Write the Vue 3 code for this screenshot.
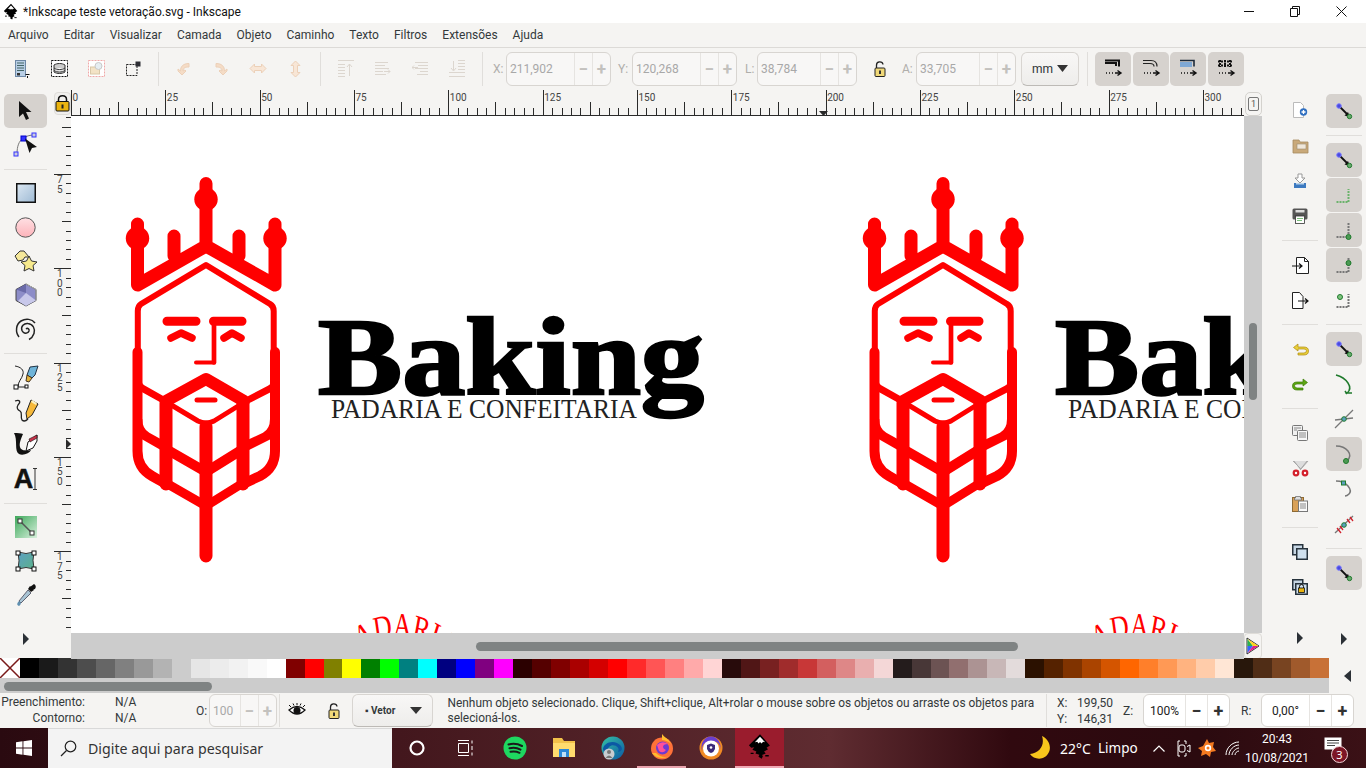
<script setup>
const menus = ['Arquivo', 'Editar', 'Visualizar', 'Camada', 'Objeto', 'Caminho', 'Texto', 'Filtros', 'Extensões', 'Ajuda']

const spins = [
  { label: 'X:', value: '211,902', text: 67, lead: 3.5, box: 13 },
  { label: 'Y:', value: '120,268', text: 67, lead: 7, box: 14 },
  { label: 'L:', value: '38,784', text: 62, lead: 8, box: 12 }
]

const PX = 9.433
const hTicks = Array.from({ length: 125 }, (_, i) => ({
  x: Math.round(i * PX) + 0.5,
  top: i % 10 === 0 ? 1 : i % 5 === 0 ? 13 : 19
}))
const hLabels = Array.from({ length: 13 }, (_, i) => ({ x: i * PX * 10 + 1.5, text: String(i * 25) }))
const vTicks = Array.from({ length: 56 }, (_, i) => ({
  y: Math.round(58 - 6 * PX + i * PX) + 0.5,
  left: (i - 6) % 10 === 0 ? 0 : (i - 6) % 5 === 0 ? 8 : 12
}))
const vLabels = [75, 100, 125, 150, 175].flatMap((n, i) =>
  String(n).split('').map((d, j) => ({ key: `${n}-${j}`, d, y: 58 + i * PX * 10 + 9 + j * 9.5 }))
)

const swatches = [
  '#000000', '#1a1a1a', '#333333', '#4d4d4d', '#666666', '#808080', '#999999', '#b3b3b3', '#cccccc', '#e6e6e6', '#ececec', '#f2f2f2', '#f9f9f9', '#ffffff',
  '#800000', '#ff0000', '#808000', '#ffff00', '#008000', '#00ff00', '#008080', '#00ffff', '#000080', '#0000ff', '#800080', '#ff00ff',
  '#2b0000', '#550000', '#800000', '#aa0000', '#d40000', '#ff0000', '#ff2a2a', '#ff5555', '#ff8080', '#ffaaaa', '#ffd5d5',
  '#280b0b', '#501616', '#782121', '#a02c2c', '#c83737', '#d35f5f', '#de8787', '#e9afaf', '#f4d7d7',
  '#241c1c', '#483737', '#6c5353', '#916f6f', '#ac9393', '#c8b7b7', '#e3dbdb',
  '#2b1100', '#552200', '#803300', '#aa4400', '#d45500', '#ff6600', '#ff7f2a', '#ff9955', '#ffb380', '#ffccaa', '#ffe6d5',
  '#28170b', '#502d16', '#784421', '#a05a2c', '#c87137'
]
</script>

<template>
  <div class="window">
    <svg class="defs" width="0" height="0">
      <defs>
        <symbol id="ink" viewBox="0 0 24 24">
          <path d="M12 1 2.500 10.500l2 2.200 2.600-.4-1.600 2 3.400 1.600-.8 1.600 3.400 1.200-.8 1.600 2.800 1.700 1-2.200-.8-.9 3.200-1.400-1.400-1.700 3.400-1.900-1.300-1.200 2.900-2z" fill="#000" />
          <path d="M12 3.200 7.600 8l2-.4 1.200 1.400L12 7.800l1.400 1.200 1.200-1.400 1.800.4z" fill="#fff" />
          <path d="M16.500 19.500h3M4 17.500h2.500" stroke="#000" stroke-width="1.200" />
        </symbol>
        <symbol id="snap-node" viewBox="0 0 36 34">
          <path d="M13 12 21 20" stroke="#111" stroke-width="1.800" />
          <path d="m24 23-5.500-1.500 3.500-3.500z" fill="#111" />
          <circle cx="13" cy="12" r="2.300" fill="#4a4adf" stroke="#7a7aff" />
          <circle cx="23.500" cy="22.500" r="2.200" fill="#6aa86f" stroke="#1f7a2c" />
        </symbol>
        <symbol id="lock-open" viewBox="0 0 14 18">
          <path d="M3.500 8V5c0-4 6-4 6.500-.5" fill="none" stroke="#222" stroke-width="1.300" />
          <rect x="2" y="8" width="10" height="8.500" rx="1" fill="#f0d878" stroke="#222" />
          <rect x="6" y="10.500" width="2" height="3.500" fill="#333" />
        </symbol>
        <symbol id="arrow-r" viewBox="0 0 8 14"><path d="M1 1v12l6-6z" fill="#2b3036" /></symbol>
      </defs>
    </svg>

    <header class="titlebar">
      <svg class="title-logo" width="18" height="18"><use href="#ink" /></svg>
      <span class="title-text">*Inkscape teste vetoração.svg - Inkscape</span>
      <div class="winctl">
        <span class="winbtn"><svg width="10" height="10"><path d="M0 5.500h10" stroke="#111" /></svg></span>
        <span class="winbtn"><svg width="10" height="11"><path d="M.5 2.500h7v8h-7zM2.500 2.500v-2h7v8h-2" fill="none" stroke="#111" /></svg></span>
        <span class="winbtn"><svg width="11" height="11"><path d="m.5.500 10 10M10.500.500l-10 10" stroke="#111" /></svg></span>
      </div>
    </header>

    <nav class="menubar">
      <span v-for="m in menus" :key="m">{{ m }}</span>
    </nav>

    <div class="toolbar">
      <span class="cell"><svg width="16" height="20" viewBox="0 0 16 20"><rect x="1.500" y="1.500" width="10" height="16" fill="#b9cfe6" stroke="#6d87a5" /><path d="M3 4h7M3 6.500h7M3 9h7M3 11.500h7" stroke="#466" /><rect x="3" y="14" width="3" height="2.500" fill="#333" /><path d="M11.500 15.500h4M13.500 17v2" stroke="#111" /></svg></span>
      <span class="cell"><svg width="17" height="17" viewBox="0 0 17 17"><rect x=".5" y=".5" width="16" height="16" fill="#fff" stroke="#111" stroke-dasharray="2 1" /><path d="M3 5c3-2 8-2 11 0v7c-3 2-8 2-11 0zM3 8c3 2 8 2 11 0M3 10.500c3 2 8 2 11 0" fill="#ccc" stroke="#333" /></svg></span>
      <span class="cell"><svg width="17" height="17" viewBox="0 0 17 17"><rect x=".5" y=".5" width="16" height="16" fill="#fff" stroke="#f0a8a8" stroke-dasharray="2 1" /><rect x="2.500" y="7" width="9" height="7" fill="#f3e3c6" stroke="#d8c8a8" /><circle cx="10.500" cy="6" r="3.500" fill="#e6eef2" stroke="#c8c8c8" /></svg></span>
      <span class="cell"><svg width="15" height="15" viewBox="0 0 15 15"><rect x=".5" y="3.500" width="10.500" height="11" fill="none" stroke="#222" stroke-dasharray="2 1" /><rect x="9.500" y=".5" width="5" height="5" fill="#2d2d33" /></svg></span>
      <i class="vsep"></i>
      <span class="cell"><svg width="14" height="16" viewBox="0 0 14 16"><path d="M12 2.500C6 2.500 3.500 5.500 3.500 10L1 8v2l4 4 4-4-1-1-2 1c0-3 2-4 6-4z" fill="#f5dcc6" stroke="#ecd0b8" /></svg></span>
      <span class="cell"><svg width="14" height="16" viewBox="0 0 14 16"><path d="M2 2.500c6 0 8.500 3 8.500 7.500l2.500-2v2l-4 4-4-4 1-1 2 1c0-3-2-4-6-4z" fill="#f5dcc6" stroke="#ecd0b8" /></svg></span>
      <span class="cell"><svg width="18" height="11" viewBox="0 0 18 11"><path d="M1 5.500 5.500 1v2.500h7V1L17 5.500 12.500 10V7.500h-7V10z" fill="#f8e6d6" stroke="#ecd0b8" /></svg></span>
      <span class="cell"><svg width="11" height="18" viewBox="0 0 11 18"><path d="M5.500 1 10 5.500H7.500v7H10L5.500 17 1 12.500h2.500v-7H1z" fill="#f8e6d6" stroke="#ecd0b8" /></svg></span>
      <i class="vsep"></i>
      <span class="cell"><svg class="faded" width="16" height="17" viewBox="0 0 16 17"><path d="M0 .5h16M0 4.500h7M0 7.500h7M0 10.500h7M0 13.500h7M0 16.500h7M11.500 16V4M9 7l2.500-3L14 7" /></svg></span>
      <span class="cell"><svg class="faded" width="16" height="15" viewBox="0 0 16 15"><path d="M0 1.500h13M0 4.500h10M0 7.500h14M0 10.500h8M0 13.500h11M9 10.500h6M13 8.500l2 2-2 2" /></svg></span>
      <span class="cell"><svg class="faded" width="16" height="15" viewBox="0 0 16 15"><path d="M3 1.500h13M6 4.500h10M3 7.500h13M8 10.500h8M5 13.500h11M0 6.500h6M2 4.500l-2 2 2 2" /></svg></span>
      <span class="cell"><svg class="faded" width="16" height="17" viewBox="0 0 16 17"><path d="M9 .5h7M9 3.500h7M9 6.500h7M9 9.500h7M0 12.500h16M0 16.500h16M4.500 1v9M2 8l2.500 3L7 8" /></svg></span>
      <i class="vsep"></i>

      <template v-for="s in spins" :key="s.label">
        <span class="spin-label" :style="{ marginLeft: s.lead + 'px', width: s.box + 'px' }">{{ s.label }}</span>
        <div class="spin">
          <span class="spin-value" :style="{ width: s.text + 'px' }">{{ s.value }}</span>
          <span class="spin-btn">−</span>
          <span class="spin-btn">+</span>
        </div>
      </template>
      <svg class="tb-lock" width="14" height="18"><use href="#lock-open" /></svg>
      <span class="spin-label a-label">A:</span>
      <div class="spin">
        <span class="spin-value a-value">33,705</span>
        <span class="spin-btn">−</span>
        <span class="spin-btn">+</span>
      </div>
      <div class="unit">mm <svg width="11" height="7"><path d="M0 0h11L5.500 7z" fill="#333" /></svg></div>
      <i class="vsep unit-sep"></i>
      <span class="toggle"><svg width="20" height="22" viewBox="0 0 20 22"><path d="M2 2.500h14v6M2 5h11v3" fill="none" stroke="#111" stroke-width="2" /><path d="M3 15h1M6 15h1M9 15h1M12 15h5M14.500 12.500 18 15l-3.500 2.500" stroke="#111" stroke-width="1.400" fill="none" /></svg></span>
      <span class="toggle"><svg width="20" height="22" viewBox="0 0 20 22"><path d="M2 2.500h8q6 0 6 6M2 5.500h7q4 0 4 3" fill="none" stroke="#222" stroke-width="1.200" /><path d="M3 15h1M6 15h1M9 15h1M12 15h5M14.500 12.500 18 15l-3.500 2.500" stroke="#111" stroke-width="1.400" fill="none" /></svg></span>
      <span class="toggle"><svg width="20" height="22" viewBox="0 0 20 22"><path d="M2 2.500h14v6" fill="none" stroke="#1c2a3a" stroke-width="1.600" /><rect x="2" y="4" width="12" height="5" fill="#7fa8d4" /><path d="M3 15h1M6 15h1M9 15h1M12 15h5M14.500 12.500 18 15l-3.500 2.500" stroke="#111" stroke-width="1.400" fill="none" /></svg></span>
      <span class="toggle"><svg width="20" height="22" viewBox="0 0 20 22"><path d="M2 3.500h14M2 7.500h14M4 2v7M9 2v7M14 2v7" stroke="#111" stroke-width="2" stroke-dasharray="2 1" /><path d="M3 15h1M6 15h1M9 15h1M12 15h5M14.500 12.500 18 15l-3.500 2.500" stroke="#111" stroke-width="1.400" fill="none" /></svg></span>
    </div>

    <div class="work">
      <aside class="tools">
        <span class="tool on"><svg width="18" height="22" viewBox="0 0 18 22"><path d="M2 1v16l4-3.500 3 6.500 3-1.500-3-6.500h5.500z" fill="#111" /></svg></span>
        <span class="tool"><svg width="28" height="26" viewBox="0 0 28 26"><path d="M5 22C5 14 7 9 11 6.500 14 4 18 3 22 3" fill="none" stroke="#777" /><rect x="2" y="20" width="4" height="4" fill="#ccd" stroke="#33f" /><rect x="20" y="1" width="4" height="4" fill="#ccd" stroke="#33f" /><rect x="9" y="4" width="5" height="5" fill="#33f" stroke="#00c" /><path d="M13 6.500 25 15l-5 1-2.500 5z" fill="#111" /></svg></span>
        <i class="tool-sep"></i>
        <span class="tool"><svg width="20" height="20" viewBox="0 0 20 20"><defs><linearGradient id="gr" x1="0" y1="0" x2="1" y2="1"><stop offset="0" stop-color="#dce8f3" /><stop offset="1" stop-color="#9ebad4" /></linearGradient></defs><rect x=".75" y=".75" width="18.500" height="18.500" fill="url(#gr)" stroke="#111" stroke-width="1.500" /></svg></span>
        <span class="tool"><svg width="21" height="21" viewBox="0 0 21 21"><defs><linearGradient id="gc" x1="0" y1="0" x2="0" y2="1"><stop offset="0" stop-color="#ffe0e3" /><stop offset="1" stop-color="#fdb3ba" /></linearGradient></defs><circle cx="10.500" cy="10.500" r="9.700" fill="url(#gc)" stroke="#555" stroke-width="1" /></svg></span>
        <span class="tool"><svg width="24" height="22" viewBox="0 0 24 22"><path d="M6 1 1 6l3 5 5-1 2-3 4 0-5-6z" fill="#f5e89a" stroke="#333" /><path d="m15 6 2.500 5 5.500 1-4 3.500 1 5.500-5-2.500-5 2.500 1-5.500-4-3.500 5.500-1z" fill="#f7ea8d" stroke="#333" /></svg></span>
        <span class="tool"><svg width="22" height="24" viewBox="0 0 22 24"><path d="M11 1 21 6.500v11L11 23 1 17.500v-11z" fill="#8d8dc8" stroke="#444" /><path d="M11 1v9L1 6.500z" fill="#6a6aa8" /><path d="M11 10l10 7.500L11 23 3 18z" fill="#c8c8ea" /><path d="M11 1 21 6.500v11" fill="none" stroke="#aaa" /></svg></span>
        <span class="tool"><svg width="24" height="24" viewBox="0 0 24 24"><path d="M12 12c1.500-1.500 3.500 0 3 2-1 3-5.500 3-7-.5-1.500-4 2-7.500 6-7 5 .5 7.500 5.500 6 10-1 3-3 5-5 6M5 20C1 15 2 7 7 4c5-3 11-2 14 2" fill="none" stroke="#222" stroke-width="1.500" /></svg></span>
        <i class="tool-sep"></i>
        <span class="tool"><svg width="26" height="26" viewBox="0 0 26 26"><path d="M2 2c6 1 9 4 8 8-1 5-5 7-5 13M5 23h9" fill="none" stroke="#222" /><rect x="1" y="21" width="4" height="4" fill="#fff" stroke="#111" /><rect x="12" y="21" width="3" height="3" fill="#fff" stroke="#111" /><path d="m17 3 8-1-3 9-3 3-5-3z" fill="#6fb4d8" stroke="#234" /><path d="m14 11 5 3-3 4-3-1z" fill="#e2b33d" stroke="#432" /></svg></span>
        <span class="tool"><svg width="26" height="26" viewBox="0 0 26 26"><path d="M2 3c5-2 6 1 3 4-2 3 0 5 2 6 3 2 0 5 2 9 2 2 4 1 6-1" fill="none" stroke="#222" stroke-width="1.300" /><path d="m18 2 7 4-6 11-5 4-1-6z" fill="#f6b93b" stroke="#222" /><path d="m19 2 5 3-1 2-5-3z" fill="#faf0c0" /></svg></span>
        <span class="tool"><svg width="26" height="26" viewBox="0 0 26 26"><path d="M1 1c4 0 7 0 9 1-2 5-4 9-3 13 1 4 7 4 11 3-1 3-8 6-12 4C1 19 5 8 1 1z" fill="#111" /><path d="M13 19 15 10 24 3 24 9 20 16Z" fill="#fff" stroke="#111" /><path d="m16 7 8-4v3l-7 4z" fill="#c8324a" stroke="#111" stroke-width=".6" /></svg></span>
        <span class="tool"><span class="a-glyph">A</span><svg class="ibeam" width="4" height="22"><path d="M0 .5h4M0 21.500h4M2 0v22" stroke="#333" /></svg></span>
        <i class="tool-sep"></i>
        <span class="tool"><svg width="22" height="22" viewBox="0 0 22 22"><defs><linearGradient id="gg" x1="0" y1="0" x2="1" y2="1"><stop offset="0" stop-color="#3da85a" /><stop offset="1" stop-color="#d8f0dd" /></linearGradient></defs><rect width="22" height="22" fill="url(#gg)" /><path d="M5 5 16 16" stroke="#555" stroke-width="1.500" /><rect x="3" y="3" width="4" height="4" fill="#fff" stroke="#333" /><rect x="15" y="15" width="4" height="4" fill="#fff" stroke="#333" /></svg></span>
        <span class="tool"><svg width="22" height="22" viewBox="0 0 22 22"><defs><linearGradient id="gm" x1="0" y1="0" x2="1" y2="1"><stop offset="0" stop-color="#5c9fc4" /><stop offset="1" stop-color="#5bb18a" /></linearGradient></defs><path d="M3 2q8 3 16 0-2 8 0 17-8-3-16 0 2-8 0-17z" fill="url(#gm)" stroke="#333" /><g fill="#fff" stroke="#111"><rect x="1" y="1" width="4" height="4" /><rect x="17" y="1" width="4" height="4" /><rect x="1" y="17" width="4" height="4" /><rect x="17" y="17" width="4" height="4" /></g></svg></span>
        <span class="tool"><svg width="22" height="24" viewBox="0 0 22 24"><path d="m15 3 4 4-3 2-3-3z" fill="#111" /><path d="M19 1q3 2 1 5l-3 1-2-3z" fill="#111" /><path d="M13 7 4 18l2 2 10-10z" fill="#a9c4d4" stroke="#445" stroke-width=".8" /><path d="M4 18q-3 3-1 4.500t3-2.500z" fill="#5f8fb0" /></svg></span>
        <svg class="more tools-more" width="8" height="14"><use href="#arrow-r" /></svg>
      </aside>

      <main class="center">
        <div class="ruler-row">
          <span class="lock-corner"><svg width="15" height="17" viewBox="0 0 15 17"><path d="M3.500 7V4.500c0-5 8-5 8 0V7" fill="none" stroke="#111" stroke-width="1.500" /><rect x="1" y="6.500" width="13" height="9.500" rx="1" fill="#eab30f" stroke="#111" /><rect x="6.500" y="9.500" width="2" height="4" fill="#222" /></svg></span>
          <svg class="hruler" width="1173" height="27">
            <path v-for="t in hTicks" :key="t.x" :d="`M${t.x} ${t.top}V26`" stroke="#2a2a2a" />
            <path d="M0 26.500H1173" stroke="#2a2a2a" />
            <text v-for="l in hLabels" :key="l.text" :x="l.x" y="11.500" class="rlabel">{{ l.text }}</text>
            <path d="M748 22h9l-4.500 5z" fill="#2a2a2a" />
          </svg>
          <span class="one-btn"><b>1</b></span>
        </div>

        <div class="canvas-row">
          <svg class="vruler" width="17" height="517">
            <path v-for="t in vTicks" :key="t.y" :d="`M${t.left} ${t.y}H17`" stroke="#2a2a2a" />
            <text v-for="l in vLabels" :key="l.key" x="3" :y="l.y" class="rlabel">{{ l.d }}</text>
            <path d="M12 323l5 5-5 5z" fill="#2a2a2a" />
          </svg>
          <svg class="canvas" width="1173" height="517" viewBox="71 115 1173 517">
            <g id="king" fill="none" stroke="#f00" stroke-linecap="round" stroke-linejoin="round">
              <path d="M137.500 223V284L206 245l69 39V223M206 182.500V245M174 235V255M239 235V255" stroke-width="13" />
              <g fill="#f00" stroke="none">
                <circle cx="137.500" cy="237.300" r="11.700" />
                <circle cx="206" cy="198.300" r="11.700" />
                <circle cx="275" cy="237.300" r="11.700" />
                <path d="M138 418H142.300Q142.300 428 149.300 431.700L166 441V452L138 436ZM275 418H270Q270 428 263 431.700L243 441V452L275 436Z" />
              </g>
              <path d="M137.800 350V310Q137.800 305 141 303L206 264L270 303Q273.700 305 273.700 310V350" stroke-width="6" />
              <path d="M137.500 351V450Q137.500 467 152 475L166 483M275 351V450Q275 467 260 475L243 483" stroke-width="10" />
              <path d="M166 400 206 378 244 400" stroke-width="12" />
              <path d="M138 381Q139 385 143 387.600L162 398.300M275 381Q274 385 270 387.600L250 398" stroke-width="7" />
              <path d="M166 402V483M243 402V483M206 426V555" stroke-width="13" />
              <path d="M168 402 198 420Q206 424 214 420L243 402" stroke-width="5" />
              <path d="M166 448 206 471 243 448" stroke-width="10" />
              <path d="M166 482 206 505 243 482" stroke-width="9" />
              <path d="M197 399H215" stroke-width="5" />
              <path d="M167 320.300H196M213.500 320.300H242" stroke-width="9" />
              <path d="M171 337 181 332 192 337M224 337 232 332 241 337" stroke-width="7.500" />
              <path d="M214 321V361.500" stroke-width="4.700" />
              <path d="M214 361.500H196" stroke-width="4" />
            </g>
            <use href="#king" x="737" />
            <g id="wordmark">
              <text class="brand" x="318" y="393" textLength="386" lengthAdjust="spacingAndGlyphs">Baking</text>
              <text class="brand-sub" x="331" y="417" textLength="306" lengthAdjust="spacingAndGlyphs">PADARIA E CONFEITARIA</text>
              <path id="arc" d="M290 724.400A112.500 112.500 0 0 1 510 724.400" fill="none" />
              <text class="arc-text" transform="translate(400 0) scale(.75 1) translate(-400 0)"><textPath href="#arc" startOffset="50%" text-anchor="middle">PADARIA</textPath></text>
            </g>
            <use href="#wordmark" x="737" />
          </svg>
          <div class="vscroll"><span class="vthumb"></span></div>
        </div>

        <div class="hscroll-row">
          <span class="hscroll-gap"></span>
          <div class="hscroll"><span class="hthumb"></span></div>
          <span class="wheel-btn"><svg width="14" height="18" viewBox="0 0 14 18"><path d="M1 1 13 9 1 17z" fill="#fff" stroke="#333" /><path d="M1.500 2 7 9H1.500z" fill="#2bb24c" /><path d="M1.500 16 7 9H1.500z" fill="#3366ff" /><path d="M1.500 2 12.500 9H7z" fill="#ffd21e" /><path d="M1.500 16 12.500 9H7z" fill="#e0218a" /></svg></span>
        </div>
      </main>

      <aside class="cmds">
        <span class="cmd"><svg width="16" height="18" viewBox="0 0 16 18"><path d="M1.500.5h7l3 3v12h-10z" fill="#fff" stroke="#bbb" /><circle cx="11.500" cy="10" r="3.700" fill="#2f6fc1" /><path d="M9.500 10h4M11.500 8v4" stroke="#fff" stroke-width="1.300" /></svg></span>
        <span class="cmd"><svg width="17" height="15" viewBox="0 0 17 15"><path d="M1 1h6l1 2h8v11H1z" fill="#c9a97a" stroke="#a68b60" stroke-width=".8" /><rect x="5" y="5" width="9" height="5" fill="#efe7da" stroke="#9a8a70" stroke-width=".6" /></svg></span>
        <span class="cmd"><svg width="14" height="16" viewBox="0 0 14 16"><path d="M5 1h4v4h3L7 10 2 5h3z" fill="#fff" stroke="#999" /><rect x="1" y="10" width="12" height="5" fill="#3d7ac0" /><rect x="3" y="10" width="8" height="1.500" fill="#bcd4ea" /></svg></span>
        <span class="cmd"><svg width="16" height="16" viewBox="0 0 16 16"><rect x=".5" y=".5" width="15" height="11" rx="1.500" fill="#555" /><rect x="3.500" y="2" width="9" height="2.500" fill="#ddd" /><rect x="3.500" y="8" width="9" height="7.500" fill="#fff" stroke="#333" stroke-width=".8" /><path d="M5 10.500h6M5 12.500h5" stroke="#7abf7a" /></svg></span>
        <i class="cmd-sep"></i>
        <span class="cmd"><svg width="17" height="17" viewBox="0 0 17 17"><path d="M4.500.5h8l4 4v12h-12z" fill="#fff" stroke="#222" /><path d="M12.500.5v4h4" fill="none" stroke="#222" /><path d="M0 9h10M7 6.500 10 9l-3 2.500" fill="none" stroke="#111" stroke-width="1.200" /></svg></span>
        <span class="cmd"><svg width="17" height="17" viewBox="0 0 17 17"><path d="M.5.500h7l3.500 4v12H.5z" fill="#fff" stroke="#222" /><path d="M6 9h10M13 6.500 16 9l-3 2.500" fill="none" stroke="#111" stroke-width="1.200" /></svg></span>
        <i class="cmd-sep"></i>
        <span class="cmd"><svg width="17" height="13" viewBox="0 0 17 13"><path d="M6 1 1.500 4.500 6 8V6h6q2.500 0 2.500 1.800T12 10H6v2h6q4.500 0 4.500-4T12 4H6z" fill="#e8cf3a" stroke="#b08a10" stroke-width=".7" /></svg></span>
        <span class="cmd"><svg width="17" height="13" viewBox="0 0 17 13"><path d="M11 1l4.500 3.500L11 8V6H5Q2.500 6 2.500 7.800T5 10h6v2H5Q.5 12 .5 8T5 4h6z" fill="#5da612" stroke="#3d7d0a" stroke-width=".7" /></svg></span>
        <i class="cmd-sep"></i>
        <span class="cmd"><svg width="16" height="16" viewBox="0 0 16 16"><rect x=".5" y=".5" width="10" height="10" rx="1" fill="#f1f1f1" stroke="#777" /><rect x="5.500" y="5.500" width="10" height="10" rx="1" fill="#f8f8f8" stroke="#777" /><path d="M2 3h7M2 5h3M7 8h7M7 10h7M7 12h7" stroke="#888" /></svg></span>
        <span class="cmd"><svg width="17" height="17" viewBox="0 0 17 17"><path d="M1 1 9 9l7-8M2 1l7 9M15 1 8 10" fill="#ddd" stroke="#aaa" /><circle cx="4" cy="13" r="3.400" fill="#d3202c" /><circle cx="13" cy="13" r="3.400" fill="#d3202c" /><circle cx="4" cy="13" r="1.200" fill="#fff" /><circle cx="13" cy="13" r="1.200" fill="#fff" /></svg></span>
        <span class="cmd"><svg width="16" height="17" viewBox="0 0 16 17"><rect x=".5" y="2.500" width="11" height="14" fill="#d9a158" stroke="#8d6a34" /><path d="M3.500 3V1.500h5V3h1v2h-7V3z" fill="#ddd" stroke="#666" stroke-width=".7" /><rect x="6.500" y="6" width="9" height="10.500" fill="#fafafa" stroke="#777" /><path d="M8 9h6M8 11h6M8 13h6" stroke="#888" /></svg></span>
        <i class="cmd-sep"></i>
        <span class="cmd"><svg width="16" height="16" viewBox="0 0 16 16"><rect x=".75" y=".75" width="10" height="10" fill="#c6d6e4" stroke="#26323c" stroke-width="1.500" /><rect x="4.750" y="4.750" width="10.500" height="10.500" fill="#cfe0ee" stroke="#26323c" stroke-width="1.500" /></svg></span>
        <span class="cmd"><svg width="16" height="16" viewBox="0 0 16 16"><rect x=".75" y=".75" width="10" height="10" fill="#c6d6e4" stroke="#26323c" stroke-width="1.500" /><rect x="3.750" y="4.750" width="11.500" height="10.500" fill="#cfe0ee" stroke="#26323c" stroke-width="1.500" /><path d="M7.500 9V7.500q0-2 2-2t2 2V9" fill="none" stroke="#111" /><rect x="6.500" y="9" width="6" height="4.500" fill="#eab30f" stroke="#111" stroke-width=".8" /></svg></span>
        <svg class="more cmds-more" width="8" height="14"><use href="#arrow-r" /></svg>
      </aside>

      <aside class="snaps">
        <span class="snap on"><svg width="36" height="34"><use href="#snap-node" /></svg></span>
        <i class="cmd-sep"></i>
        <span class="snap on"><svg width="36" height="34"><use href="#snap-node" /></svg></span>
        <span class="snap on"><svg width="36" height="34" viewBox="0 0 36 34"><path d="M10.500 24h12V11" fill="none" stroke="#6cb36c" stroke-width="2" stroke-dasharray="2 1" /></svg></span>
        <span class="snap on"><svg width="36" height="34" viewBox="0 0 36 34"><path d="M10.500 24h12V10" fill="none" stroke="#777" stroke-width="2" stroke-dasharray="2 1" /><circle cx="22.500" cy="24" r="2.500" fill="#4d9a54" stroke="#1f7a2c" /></svg></span>
        <span class="snap on"><svg width="36" height="34" viewBox="0 0 36 34"><path d="M10.500 24h12V10" fill="none" stroke="#777" stroke-width="2" stroke-dasharray="2 1" /><circle cx="22.500" cy="15" r="2.500" fill="#4d9a54" stroke="#1f7a2c" /></svg></span>
        <span class="snap"><svg width="36" height="34" viewBox="0 0 36 34"><path d="M10.500 24h12V11" fill="none" stroke="#777" stroke-width="2" stroke-dasharray="2 1" /><circle cx="14" cy="14" r="2.500" fill="#7fc47f" stroke="#1f7a2c" /></svg></span>
        <i class="cmd-sep"></i>
        <span class="snap on"><svg width="36" height="34"><use href="#snap-node" /></svg></span>
        <span class="snap"><svg width="36" height="34" viewBox="0 0 36 34"><path d="M10 8q8 2 12 8t-1 10h5M19 24l2 3" fill="none" stroke="#1f7a2c" stroke-width="1.500" /></svg></span>
        <span class="snap"><svg width="36" height="34" viewBox="0 0 36 34"><path d="M9 26 27 8" stroke="#777" stroke-width="1.300" /><path d="M9 18 27 16" stroke="#777" stroke-width="1.300" /><circle cx="18" cy="17" r="2.300" fill="#5a9fc0" stroke="#1f7a2c" /></svg></span>
        <span class="snap on"><svg width="36" height="34" viewBox="0 0 36 34"><path d="M10 9q8 0 12 5t-1 10" fill="none" stroke="#777" stroke-width="1.500" /><circle cx="20" cy="24" r="2.500" fill="#4d9a54" stroke="#1f7a2c" /></svg></span>
        <span class="snap"><svg width="36" height="34" viewBox="0 0 36 34"><path d="M10 9q8 0 12 5t1 8q-2 2-4 2" fill="none" stroke="#777" stroke-width="1.500" /><rect x="15.500" y="9" width="4" height="4" fill="#5a9fc0" stroke="#1f7a2c" /></svg></span>
        <span class="snap"><svg width="36" height="34" viewBox="0 0 36 34"><path d="M9 26 27 9" stroke="#777" stroke-width="1.300" /><path d="m11 21 4 5M14 19l3 4M21 12l3 4M24 10l3 4" stroke="#d3202c" stroke-width="1.300" /><circle cx="18" cy="18" r="2.300" fill="#5a9fc0" stroke="#1f7a2c" /></svg></span>
        <i class="cmd-sep"></i>
        <span class="snap on"><svg width="36" height="34"><use href="#snap-node" /></svg></span>
        <svg class="more snaps-more" width="8" height="14"><use href="#arrow-r" /></svg>
      </aside>
    </div>

    <div class="bottom">
      <div class="bottom-main">
        <div class="palette">
          <span class="none-swatch"><svg width="20" height="20"><path d="M0 0 20 20M20 0 0 20" stroke="#7a1a1a" stroke-width="1.500" /></svg></span>
          <i v-for="(c, i) in swatches" :key="i" class="swatch" :style="{ background: c }"></i>
        </div>
        <div class="pal-scroll"><span class="pal-thumb"></span></div>
      </div>
      <div class="pal-side"><svg width="7" height="12" viewBox="0 0 7 12"><path d="M7 0v12L0 6z" fill="#2b3036" /></svg></div>
    </div>

    <footer class="status">
      <div class="fills">
        <span class="fk">Preenchimento:</span><span class="fv">N/A</span>
        <span class="fk">Contorno:</span><span class="fv">N/A</span>
      </div>
      <span class="o-label">O:</span>
      <div class="spin st-spin">
        <span class="spin-value o-value">100</span>
        <span class="spin-btn">−</span>
        <span class="spin-btn">+</span>
      </div>
      <i class="st-sep"></i>
      <svg class="eye" width="18" height="16" viewBox="0 0 18 16"><path d="M1 7q8-7 16 0-8 8-16 0z" fill="#fff" stroke="#111" stroke-width="1.300" /><circle cx="9" cy="7.500" r="3.500" fill="#111" /><path d="M3 4 1 2M6 2.500 5 .5M9 2V0M12 2.500l1-2M15 4l2-2" stroke="#111" /></svg>
      <svg class="st-lock" width="14" height="18"><use href="#lock-open" /></svg>
      <div class="vetor"><span>▪ Vetor</span><svg width="12" height="7"><path d="M0 0h12L6 7z" fill="#333" /></svg></div>
      <p class="msg">Nenhum objeto selecionado. Clique, Shift+clique, Alt+rolar o mouse sobre os objetos ou arraste os objetos para selecioná-los.</p>
      <i class="st-sep coord-sep"></i>
      <div class="coords">
        <span>X:</span><span class="cv">199,50</span>
        <span>Y:</span><span class="cv">146,31</span>
      </div>
      <span class="z-label">Z:</span>
      <div class="spin st-spin dark">
        <span class="spin-value z-value">100%</span>
        <span class="spin-btn">−</span>
        <span class="spin-btn">+</span>
      </div>
      <span class="r-label">R:</span>
      <div class="spin st-spin dark">
        <span class="spin-value r-value">0,00°</span>
        <span class="spin-btn">−</span>
        <span class="spin-btn">+</span>
      </div>
    </footer>

    <div class="taskbar">
      <span class="start"><svg width="16" height="16" viewBox="0 0 16 16"><path d="M0 2.200 6.500 1.300v6.300H0zM7.400 1.200 16 0v7.600H7.400zM0 8.400h6.500v6.300L0 13.800zM7.400 8.400H16V16l-8.600-1.200z" fill="#fff" /></svg></span>
      <div class="search">
        <svg width="17" height="17" viewBox="0 0 17 17"><circle cx="10.500" cy="6.500" r="5.300" fill="none" stroke="#222" stroke-width="1.200" /><path d="M6.500 10.500 1 16" stroke="#222" stroke-width="1.300" /></svg>
        <span>Digite aqui para pesquisar</span>
      </div>
      <span class="task"><svg width="16" height="16"><circle cx="8" cy="8" r="6.500" fill="none" stroke="#fff" stroke-width="2.200" /></svg></span>
      <span class="task"><svg width="18" height="16" viewBox="0 0 18 16"><path d="M1.500 3.500h10v9h-10zM1 .5h11M1 15.500h11M15 .5v3M15 6v4M15 12.500v3" fill="none" stroke="#fff" /></svg></span>
      <span class="task"><svg width="24" height="24" viewBox="0 0 24 24"><circle cx="12" cy="12" r="11.500" fill="#1ed760" /><path d="M5.500 8.500q7-2 13.500 1.500M6.500 12.300q6-1.500 11 1.300M7.500 15.800q5-1 9 1" fill="none" stroke="#1a1a1a" stroke-width="2" stroke-linecap="round" /></svg></span>
      <span class="task"><svg width="22" height="22" viewBox="0 0 22 22"><path d="M0 1h9l2 3h11v16H0z" fill="#f2c14a" /><rect y="6" width="22" height="14" fill="#ffdb6e" /><rect x="6" y="12" width="10" height="8" fill="#2b88d8" /><rect x="9" y="15" width="4" height="5" fill="#bfe0f7" /></svg></span>
      <span class="task"><svg width="24" height="24" viewBox="0 0 24 24"><defs><linearGradient id="ge" x1="0" y1="0" x2="1" y2="1"><stop offset="0" stop-color="#35c1a5" /><stop offset="1" stop-color="#0c59a4" /></linearGradient></defs><circle cx="12" cy="12" r="11.500" fill="url(#ge)" /><path d="M2 13C3 6 14 3 20 10q3 5-3 6c3-5-5-9-9-5-3 3-2 8 3 11-5 0-8-4-9-9z" fill="#0c59a4" /><circle cx="8" cy="18" r="5.500" fill="#c8ccd0" /><circle cx="8" cy="16" r="2" fill="#777" /><path d="M4.500 22q3.500-5 7 0z" fill="#777" /></svg></span>
      <span class="task task-open"><svg width="24" height="26" viewBox="0 0 24 26"><circle cx="12" cy="14.500" r="11" fill="#ff7139" /><path d="M12 0c2 3 7 5 9 10-3-3-6-4-9-4z" fill="#ffbd2e" /><circle cx="12.500" cy="14" r="6.500" fill="#6e3bd1" /><path d="M7 11q5-5 11-1-5 0-5 3 0 2 3 3-3 4-7 1z" fill="#ff4f9a" /><path d="M2 19q6 8 18 3-8 3-14-3z" fill="#ffbd2e" /></svg></span>
      <span class="task"><svg width="24" height="24" viewBox="0 0 24 24"><circle cx="12" cy="12" r="11.500" fill="#f08a24" /><path d="M12 .5C5 .5 1 8 3 15q-1-9 9-10c9 0 10 6 9 10 2-7-2-14.500-9-14.500z" fill="#6a3fd0" /><circle cx="12" cy="12.500" r="8" fill="#fff" /><path d="M12 7.500l4 1.500v4q-1 3-4 4-3-1-4-4V9z" fill="#3b2a7a" /><circle cx="12" cy="11.500" r="1.300" fill="#fff" /></svg></span>
      <span class="task task-active"><svg width="28" height="28"><use href="#ink" /></svg></span>

      <div class="tray">
        <svg class="moon" width="20" height="24" viewBox="0 0 20 24"><path d="M12 0C15 9 10 17 0 18c4 6 15 7 19-2 3-7-2-14-7-16z" fill="#f8c51c" /></svg>
        <span class="temp">22°C</span>
        <span class="cond">Limpo</span>
        <svg class="chev" width="12" height="7"><path d="M.5 6.500 6 1l5.500 5.500" fill="none" stroke="#fff" stroke-width="1.200" /></svg>
        <svg class="meet" width="15" height="17" viewBox="0 0 15 17"><path d="M4 1H2v15h2M8 1h2v3M8 16h2v-3" fill="none" stroke="#fff" /><rect x="3" y="5" width="6" height="7" rx="2" fill="none" stroke="#fff" /><path d="M11 6.500l3-1.500v7l-3-1.500" fill="none" stroke="#fff" /></svg>
        <svg class="avast" width="18" height="18" viewBox="0 0 18 18"><path d="M9 0l2 4 5-1-1 5 3 4-5 1-1 5-4-3-5 2 1-5-4-3 5-2z" fill="#f47a20" /><circle cx="10" cy="9" r="3.200" fill="#fff" /><circle cx="10" cy="9" r="1.500" fill="#f47a20" /></svg>
        <svg class="wifi" width="15" height="15" viewBox="0 0 15 15"><path d="M1 14C1 7 7 1 14 1M4 14c0-5 5-10 10-10M7 14c0-3 4-7 7-7M10 14c0-2 2-4 4-4" fill="none" stroke="#fff" stroke-width="1" /></svg>
        <div class="clock"><span>20:43</span><span>10/08/2021</span></div>
        <div class="notif">
          <svg width="18" height="17" viewBox="0 0 18 17"><path d="M.5.500h17v12h-6l-3 4v-4H.5z" fill="#fff" /><path d="M3 3.500h12M3 6h12M3 8.500h8" stroke="#444" /></svg>
          <span class="badge">3</span>
        </div>
      </div>
    </div>
  </div>
</template>

<style scoped>
.window {
  width: 1366px;
  height: 768px;
  display: flex;
  flex-direction: column;
  overflow: hidden;
  background: #f5f4f2;
  color: #2e3436;
  font-family: "Roboto", "Noto Sans", sans-serif;
  font-size: 12px;
}

.defs {
  position: absolute;
}

.titlebar {
  height: 23px;
  flex: none;
  display: flex;
  align-items: center;
  background: #fff;
  color: #111;
}

.title-logo {
  margin: 0 3px 0 2px;
}

.winctl {
  margin-left: auto;
  padding-right: 2px;
  display: flex;
}

.winbtn {
  width: 46px;
  display: flex;
  justify-content: center;
}

.menubar {
  height: 24px;
  flex: none;
  display: flex;
  align-items: center;
  gap: 15px;
  padding-left: 8px;
  border-bottom: 1px solid #dcdad7;
  font-size: 12px;
  color: #33393b;
}

.toolbar {
  height: 41px;
  flex: none;
  display: flex;
  align-items: center;
  padding-left: 3.5px;
}

.cell {
  width: 37px;
  flex: none;
  display: flex;
  justify-content: center;
  align-items: center;
}

.faded {
  fill: none;
  stroke: #dcd6cf;
}

.vsep {
  width: 1px;
  height: 34px;
  flex: none;
  margin: 0 6.5px;
  background: #e0dedb;
}

.spin-label {
  flex: none;
  color: #b0aeab;
}

.spin {
  height: 34px;
  flex: none;
  display: flex;
  align-items: stretch;
  border: 1px solid #d8d5d1;
  border-radius: 6px;
  background: #f8f7f6;
  box-sizing: border-box;
}

.spin-value {
  display: flex;
  align-items: center;
  padding-left: 3px;
  box-sizing: border-box;
  color: #a8a8a8;
}

.spin-btn {
  width: 17px;
  display: flex;
  align-items: center;
  justify-content: center;
  border-left: 1px solid #e6e4e1;
  color: #c3c1be;
  font-size: 17px;
  font-weight: 700;
}

.tb-lock {
  flex: none;
  margin: 0 15px 0 16px;
}

.a-label {
  width: 14px;
}

.a-value {
  width: 62px;
}

.unit {
  width: 58px;
  height: 34px;
  flex: none;
  margin-left: 5px;
  box-sizing: border-box;
  display: flex;
  align-items: center;
  justify-content: center;
  gap: 4px;
  border: 1px solid #d8d5d1;
  border-bottom-color: #bdbab6;
  border-radius: 6px;
  background: linear-gradient(#f8f7f6, #eeedeb);
}

.unit-sep {
  margin: 0 7px 0 8px;
}

.toggle {
  width: 36px;
  height: 34px;
  flex: none;
  margin-right: 1.5px;
  display: flex;
  align-items: center;
  justify-content: center;
  border-radius: 5px;
  background: #d6d2ce;
}

.work {
  flex: 1;
  min-height: 0;
  display: flex;
}

.tools {
  width: 54px;
  flex: none;
  display: flex;
  flex-direction: column;
  align-items: center;
  padding-top: 5px;
}

.tool {
  width: 43px;
  height: 34px;
  flex: none;
  display: flex;
  align-items: center;
  justify-content: center;
  margin-left: -3px;
  border-radius: 5px;
}

.tool.on,
.snap.on {
  background: #d6d2ce;
}

.tool-sep {
  width: 43px;
  height: 1px;
  flex: none;
  margin: 6.5px 0 6.5px -3px;
  background: #e0dedb;
}

.a-glyph {
  font-family: "Liberation Sans", sans-serif;
  font-weight: 700;
  font-size: 27px;
  line-height: 1;
  color: #111;
  -webkit-text-stroke: .5px #111;
}

.more {
  flex: none;
}

.tools-more {
  margin: 20px 0 0 -3px;
}

.cmds-more {
  margin: 26px 0 0 14px;
}

.snaps-more {
  margin: 41px 0 0 14px;
}

.center {
  width: 1208px;
  flex: none;
  display: flex;
  flex-direction: column;
}

.ruler-row {
  height: 27px;
  flex: none;
  display: flex;
}

.lock-corner {
  width: 17px;
  height: 23px;
  margin-top: 3px;
  box-sizing: border-box;
  display: flex;
  align-items: center;
  justify-content: center;
  border: 1px solid #dedcd8;
  border-radius: 4px;
  background: #f0efed;
}

.hruler,
.vruler {
  flex: none;
  display: block;
}

.rlabel {
  font-family: "Roboto", sans-serif;
  font-size: 10px;
  fill: #444;
}

.one-btn {
  width: 17px;
  height: 24px;
  margin: 3px 0 0 1px;
  box-sizing: border-box;
  display: flex;
  align-items: center;
  justify-content: center;
  border: 1px solid #d4d2ce;
  border-radius: 5px;
  background: #f5f4f2;
}

.one-btn b {
  width: 11px;
  height: 14px;
  box-sizing: border-box;
  border: 1px solid #777;
  border-radius: 2px;
  font-size: 9px;
  font-weight: 400;
  line-height: 12px;
  text-align: center;
  color: #555;
}

.canvas-row {
  height: 517px;
  flex: none;
  display: flex;
}

.canvas {
  flex: none;
  display: block;
  background: #fff;
}

.brand {
  font-family: "Liberation Serif", serif;
  font-weight: 700;
  font-size: 110px;
  fill: #000;
  stroke: #000;
  stroke-width: 2.6px;
}

.brand-sub {
  font-family: "Liberation Serif", serif;
  font-size: 27px;
  fill: #222;
}

.arc-text {
  font-family: "Liberation Serif", serif;
  font-size: 34px;
  fill: #f00;
}

.vscroll {
  width: 18px;
  background: #ccc;
  position: relative;
}

.vthumb {
  position: absolute;
  left: 5px;
  top: 207px;
  width: 8px;
  height: 77px;
  border-radius: 4px;
  background: #7f8383;
}

.hscroll-row {
  height: 26px;
  flex: none;
  display: flex;
}

.hscroll-gap {
  width: 17px;
}

.hscroll {
  width: 1173px;
  background: #ccc;
  position: relative;
}

.hthumb {
  position: absolute;
  left: 405px;
  top: 9px;
  width: 542px;
  height: 9px;
  border-radius: 5px;
  background: #7f8383;
}

.wheel-btn {
  width: 18px;
  box-sizing: border-box;
  display: flex;
  align-items: center;
  justify-content: center;
  border: 1px solid #dedcd8;
  border-radius: 4px;
  background: #f5f4f2;
}

.cmds,
.snaps {
  flex: none;
  box-sizing: border-box;
  display: flex;
  flex-direction: column;
  align-items: flex-start;
}

.cmds {
  width: 60px;
  padding: 4.5px 0 0 20px;
}

.cmd {
  width: 36px;
  height: 35px;
  flex: none;
  display: flex;
  align-items: center;
  justify-content: center;
}

.cmd-sep {
  width: 36px;
  height: 1px;
  flex: none;
  margin: 6px 0 7px;
  background: #e0dedb;
}

.snaps {
  width: 44px;
  padding: 5px 0 0 4px;
}

.snap {
  width: 36px;
  height: 34px;
  flex: none;
  margin-bottom: 1px;
  display: flex;
  border-radius: 5px;
}

.bottom {
  height: 35px;
  flex: none;
  display: flex;
}

.bottom-main {
  width: 1329px;
  flex: none;
}

.palette {
  height: 20px;
  display: flex;
}

.none-swatch {
  width: 20px;
  height: 20px;
  flex: none;
  background: #fff;
}

.swatch {
  flex: 1;
}

.pal-scroll {
  height: 15px;
  background: #ccc;
  position: relative;
}

.pal-thumb {
  position: absolute;
  left: 4px;
  top: 4px;
  width: 208px;
  height: 9px;
  border-radius: 5px;
  background: #7f8383;
}

.pal-side {
  flex: 1;
  display: flex;
  justify-content: center;
  padding-top: 12px;
  box-sizing: border-box;
}

.status {
  height: 35px;
  flex: none;
  display: flex;
  align-items: center;
  color: #33393b;
}

.fills {
  width: 137px;
  flex: none;
  display: grid;
  grid-template-columns: 85px 1fr;
  column-gap: 30px;
  row-gap: 1px;
  line-height: 15px;
}

.fk {
  text-align: right;
}

.o-label {
  width: 13px;
  flex: none;
  margin-left: 59px;
}

.st-spin {
  height: 33px;
}

.o-value {
  width: 30px;
}

.st-sep {
  width: 1px;
  height: 33px;
  flex: none;
  margin: 0 0 0 2px;
  background: #e0dedb;
}

.eye {
  flex: none;
  margin-left: 8px;
}

.st-lock {
  flex: none;
  margin-left: 21px;
}

.vetor {
  width: 81px;
  height: 33px;
  flex: none;
  margin-left: 11px;
  box-sizing: border-box;
  padding: 0 10px 0 12px;
  display: flex;
  align-items: center;
  justify-content: space-between;
  border: 1px solid #d8d5d1;
  border-bottom-color: #bdbab6;
  border-radius: 6px;
  background: linear-gradient(#f8f7f6, #eeedeb);
  font-size: 10px;
  font-weight: 700;
}

.msg {
  width: 592px;
  flex: none;
  margin: 0 0 0 14.5px;
  font-size: 11.9px;
  line-height: 15px;
}

.coord-sep {
  margin-left: 6.5px;
}

.coords {
  width: 56px;
  flex: none;
  margin-left: 10px;
  display: grid;
  grid-template-columns: 10px 1fr;
  line-height: 16px;
}

.cv {
  text-align: right;
}

.z-label {
  width: 20px;
  flex: none;
  margin-left: 10px;
}

.z-value {
  width: 41px;
  justify-content: center;
  padding-left: 0;
  color: #222;
}

.r-value {
  width: 47px;
  justify-content: center;
  padding-left: 0;
  color: #222;
}

.dark {
  background: #fff;
}

.dark .spin-btn {
  width: 21px;
  color: #333;
  font-size: 18px;
}

.r-label {
  width: 20px;
  flex: none;
  margin-left: 11px;
}

.taskbar {
  height: 40px;
  flex: none;
  display: flex;
  align-items: stretch;
  color: #fff;
  background: linear-gradient(90deg, #2a0a10 0, #43171d 400px, #5f2c31 830px, #30090f 1010px, #2b0a0f 1200px, #3b1116 1366px);
}

.start {
  width: 48px;
  flex: none;
  display: flex;
  align-items: center;
  justify-content: center;
}

.search {
  width: 344px;
  flex: none;
  box-sizing: border-box;
  display: flex;
  align-items: center;
  gap: 11px;
  padding-left: 12px;
  background: #f3f3f3;
  border-top: 1px solid #d9d9d9;
  color: #333;
  font-family: "Noto Sans", sans-serif;
  font-size: 14.2px;
}

.task {
  width: 49px;
  flex: none;
  box-sizing: border-box;
  display: flex;
  align-items: center;
  justify-content: center;
}

.task-open {
  border-bottom: 2px solid #e8a3ad;
}

.task-active {
  background: #9a1c2d;
  border-bottom: 2px solid #f0a8b4;
}

.tray {
  margin-left: auto;
  display: flex;
  align-items: center;
  font-family: "Noto Sans", sans-serif;
  font-size: 14px;
}

.temp {
  width: 38px;
  margin-left: 10px;
}

.cond {
  width: 38px;
  font-size: 13.5px;
}

.chev {
  margin-left: 17px;
}

.meet {
  margin-left: 10.5px;
}

.avast {
  margin-left: 7.5px;
}

.wifi {
  margin-left: 8.5px;
}

.clock {
  width: 70px;
  margin-left: 2.5px;
  display: flex;
  flex-direction: column;
  align-items: center;
  gap: 3px;
  font-family: "Roboto", sans-serif;
  font-size: 12px;
  line-height: 16px;
}

.notif {
  width: 54px;
  align-self: stretch;
  box-sizing: border-box;
  padding: 0 0 6px 12px;
  position: relative;
  display: flex;
  align-items: center;
}

.badge {
  position: absolute;
  left: 19px;
  top: 18px;
  width: 17px;
  height: 17px;
  border-radius: 50%;
  border: 1px solid #f2d7da;
  box-sizing: border-box;
  background: #7d1626;
  font-size: 11px;
  line-height: 15px;
  text-align: center;
}
</style>
